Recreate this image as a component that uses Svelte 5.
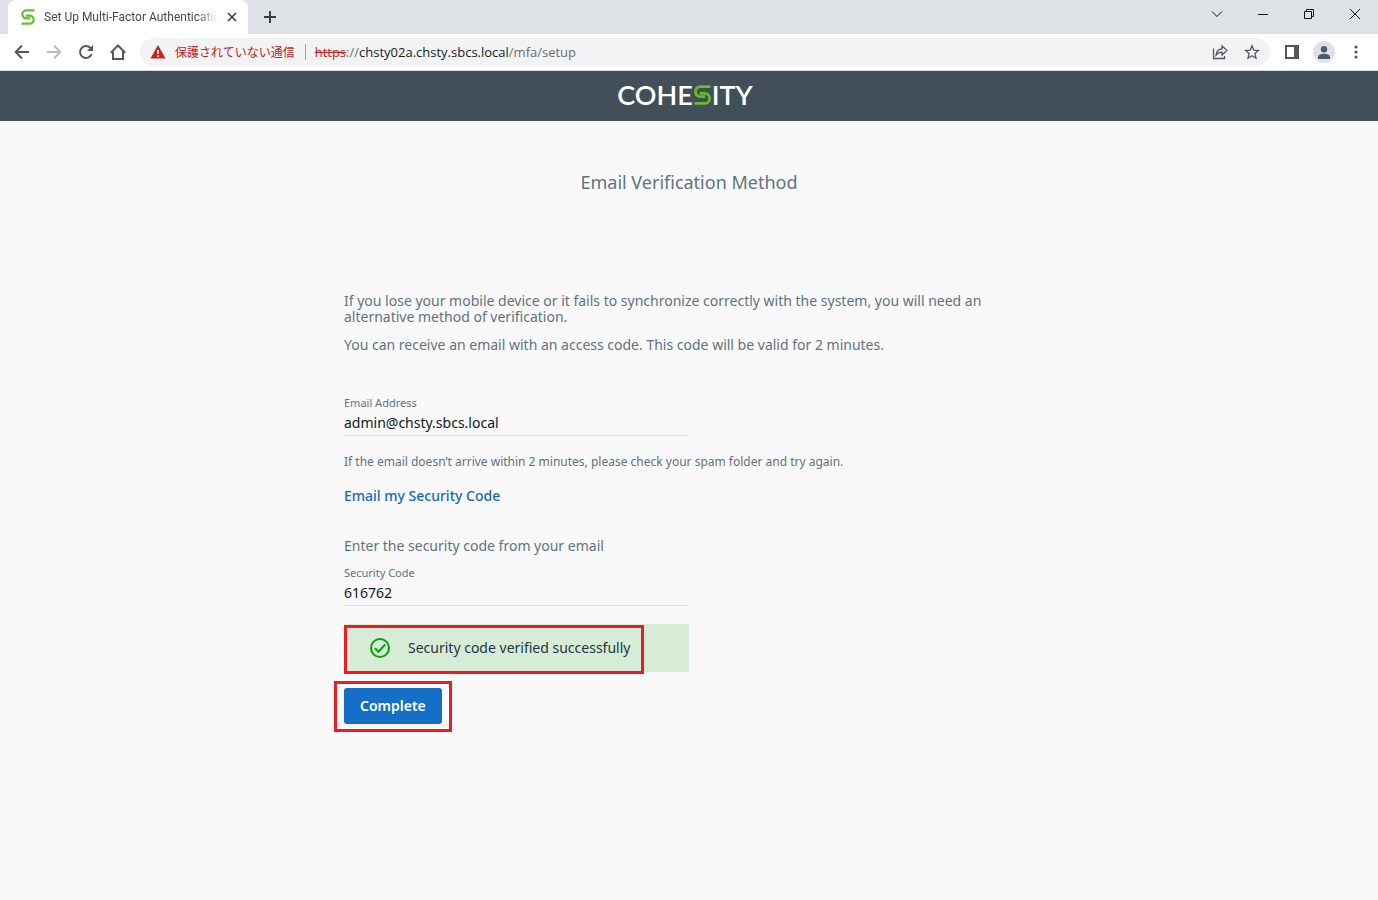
<script lang="ts">
	let email = $state('admin@chsty.sbcs.local');
	let code = $state('616762');
	let verified = $state(true);
</script>

{#snippet sMark()}
	<path d="M16.500 1.600H6.400a5 5 0 0 0 0 10h4.800" />
	<path d="M.5 18.400h10.100a5 5 0 0 0 0-10H5.800" />
{/snippet}

<div class="window">
	<div class="tabstrip">
		<div class="tab">
			<svg class="favicon" viewBox="0 0 17 20" aria-hidden="true">{@render sMark()}</svg>
			<span class="tab-title">Set Up Multi-Factor Authentication</span>
			<button class="tab-close" aria-label="Close tab">
				<svg width="10" height="10" viewBox="0 0 10 10"><path d="M1 1l8 8M9 1L1 9" stroke="#3c4043" stroke-width="1.600" /></svg>
			</button>
		</div>
		<button class="new-tab" aria-label="New tab">
			<svg width="12" height="12" viewBox="0 0 12 12"><path d="M6 0v12M0 6h12" stroke="#3c4043" stroke-width="2" /></svg>
		</button>
		<div class="controls">
			<button aria-label="Search tabs">
				<svg width="12" height="12" viewBox="0 0 12 12"><path d="M1 3.500l5 5 5-5" /></svg>
			</button>
			<button aria-label="Minimize">
				<svg width="12" height="12" viewBox="0 0 12 12"><path d="M1 6.500h10" /></svg>
			</button>
			<button aria-label="Restore">
				<svg width="12" height="12" viewBox="0 0 12 12"><path d="M1.500 3.500h7v7h-7zM3.500 3.500v-2h7v7h-2" /></svg>
			</button>
			<button aria-label="Close">
				<svg width="12" height="12" viewBox="0 0 12 12"><path d="M1 1l10 10M11 1L1 11" /></svg>
			</button>
		</div>
	</div>

	<div class="toolbar">
		<div class="nav">
			<button aria-label="Back">
				<svg width="16" height="16" viewBox="0 0 16 16"><path d="M15 8H2M8 1.500L1.700 8 8 14.500" /></svg>
			</button>
			<button class="off" aria-label="Forward" disabled>
				<svg width="16" height="16" viewBox="0 0 16 16"><path d="M1 8h13M8 1.500L14.300 8 8 14.500" /></svg>
			</button>
			<button aria-label="Reload">
				<svg width="16" height="16" viewBox="0 0 16 16">
					<path d="M13.600 10.200A6 6 0 1 1 12.400 3.900L14 5.500" />
					<path d="M15 1v6H9z" class="solid" />
				</svg>
			</button>
			<button aria-label="Home">
				<svg width="16" height="16" viewBox="0 0 16 16"><path d="M.8 8.800L8 1.500l7.200 7.300M3 7.500V15h10V7.500" /></svg>
			</button>
		</div>
		<div class="omnibox">
			<svg class="warn" width="16" height="14" viewBox="0 0 16 14" aria-hidden="true">
				<path d="M8 0l7.500 13.500H.5z" fill="#c5221f" />
				<path d="M8 5v4M8 10.200v1.800" stroke="#fff" stroke-width="1.600" />
			</svg>
			<span class="insecure">保護されていない通信</span>
			<span class="divider"></span>
			<div class="url" role="textbox" aria-label="Address" tabindex="0"><s>https</s>://<b>chsty02a.chsty.sbcs.local</b>/mfa/setup</div>
			<button aria-label="Share">
				<svg class="thin" width="16" height="16" viewBox="0 0 16 16">
					<path d="M1.500 4.500v10h11V12M4 11c.5-4 2.500-6 6-6.200V2l5 4.500-5 4.500V8.200C7.500 8.200 5.500 9 4 11z" />
				</svg>
			</button>
			<button aria-label="Bookmark">
				<svg class="thin" width="16" height="16" viewBox="0 0 16 16">
					<path d="M8 1.800l1.800 4.300 4.700.4-3.600 3.100 1.100 4.600L8 11.800l-4 2.400 1.100-4.600L1.500 6.500l4.700-.4z" />
				</svg>
			</button>
		</div>
		<div class="actions">
			<button aria-label="Side panel">
				<svg width="14" height="14" viewBox="0 0 14 14"><path d="M1 1h12v12H1z" /><path d="M9 1h4v12H9z" class="solid" /></svg>
			</button>
			<button class="avatar" aria-label="Profile">
				<svg width="12" height="13" viewBox="0 0 12 13"><circle cx="6" cy="3.200" r="3.200" /><path d="M0 13v-2c0-2.200 3-3.300 6-3.300s6 1.100 6 3.300v2z" /></svg>
			</button>
			<button aria-label="Menu">
				<svg width="4" height="14" viewBox="0 0 4 14" class="dots"><circle cx="2" cy="2" r="1.600" /><circle cx="2" cy="7" r="1.600" /><circle cx="2" cy="12" r="1.600" /></svg>
			</button>
		</div>
	</div>

	<header class="brand">
		<span class="logo">COHE<svg viewBox="0 0 17 20" role="img" aria-label="S">{@render sMark()}</svg>ITY</span>
	</header>

	<main>
		<h1>Email Verification Method</h1>

		<form onsubmit={(e) => e.preventDefault()}>
			<div class="intro">
				<p>If you lose your mobile device or it fails to synchronize correctly with the system, you will need an alternative method of verification.</p>
				<p>You can receive an email with an access code. This code will be valid for 2 minutes.</p>
			</div>

			<div class="field">
				<label for="email">Email Address</label>
				<input id="email" type="text" bind:value={email} />
			</div>
			<p class="hint">If the email doesn’t arrive within 2 minutes, please check your spam folder and try again.</p>
			<a class="send" href="#send">Email my Security Code</a>

			<p class="enter">Enter the security code from your email</p>
			<div class="field">
				<label for="code">Security Code</label>
				<input id="code" type="text" bind:value={code} />
			</div>

			{#if verified}
				<div class="alert" role="status">
					<svg width="20" height="20" viewBox="0 0 20 20" aria-hidden="true">
						<circle cx="10" cy="10" r="9" />
						<path d="M5 10.300l3.400 3.400 6.800-7.200" />
					</svg>
					<span>Security code verified successfully</span>
					<i class="mark mark-alert"></i>
				</div>
			{/if}
			<div class="submit">
				<button type="submit">Complete</button>
				<i class="mark mark-submit"></i>
			</div>
		</form>
	</main>
</div>

<style>
	:global(body) {
		margin: 0;
		background: #f9f9f9;
	}

	.window {
		min-height: 100vh;
		background: #f9f9f9;
		font-family: 'Noto Sans', sans-serif;
		font-size: 14px;
		line-height: 16px;
		color: #5f7380;
	}

	button {
		display: flex;
		align-items: center;
		justify-content: center;
		padding: 0;
		border: 0;
		background: none;
		font: inherit;
		cursor: pointer;
	}

	p,
	h1 {
		margin: 0;
	}

	/* browser chrome */
	.tabstrip {
		display: flex;
		height: 34px;
		background: #dee1e6;
	}
	.tab {
		display: flex;
		align-items: center;
		width: 240px;
		box-sizing: border-box;
		margin-left: 8px;
		padding: 0 8px 0 13px;
		border-radius: 8px 8px 0 0;
		background: #fff;
	}
	.favicon {
		width: 14px;
		height: 16px;
		flex: none;
		margin-right: 9px;
	}
	.favicon,
	.logo svg {
		fill: none;
		stroke: #66bc29;
		stroke-width: 2.8;
	}
	.tab-title {
		flex: 1;
		overflow: hidden;
		white-space: nowrap;
		font-family: Roboto, sans-serif;
		font-size: 12px;
		color: #45494d;
		mask-image: linear-gradient(to right, #000 88%, transparent);
	}
	.tab-close {
		width: 16px;
		height: 16px;
		margin-left: 6px;
	}
	.new-tab {
		width: 28px;
		margin-left: 8px;
	}
	.controls {
		display: flex;
		margin-left: auto;
	}
	.controls button {
		width: 46px;
		height: 28px;
	}
	.controls svg {
		fill: none;
		stroke: #111;
	}

	.toolbar {
		display: flex;
		align-items: center;
		height: 36px;
		border-bottom: 1px solid #d5d9dc;
		background: #fff;
	}
	.toolbar button {
		flex: none;
		width: 32px;
		height: 28px;
	}
	.toolbar svg {
		fill: none;
		stroke: #54585d;
		stroke-width: 2;
	}
	.toolbar .thin {
		stroke-width: 1.3;
	}
	.toolbar .solid {
		fill: #54585d;
		stroke: none;
	}
	.nav,
	.actions {
		display: flex;
		align-items: center;
	}
	.nav {
		padding: 0 6px;
	}
	.toolbar .off svg {
		stroke: #babcbe;
	}
	.omnibox {
		display: flex;
		flex: 1;
		align-items: center;
		height: 28px;
		padding: 0 2px 0 10px;
		border-radius: 14px;
		background: #f1f3f4;
		white-space: nowrap;
	}
	.toolbar .warn {
		flex: none;
		margin-right: 9px;
		stroke: none;
	}
	.insecure {
		font-family: 'Noto Sans CJK JP', sans-serif;
		font-size: 12px;
		color: #c5221f;
	}
	.divider {
		width: 1px;
		height: 16px;
		margin: 0 9px 0 10px;
		background: #9aa0a6;
	}
	.url {
		flex: 1;
		font-family: 'Open Sans', sans-serif;
		font-size: 13px;
		color: #6a6e73;
	}
	.url s {
		color: #c5221f;
	}
	.url b {
		font-weight: 400;
		color: #202124;
	}
	.actions {
		padding: 0 6px;
	}
	.toolbar .avatar {
		width: 22px;
		height: 22px;
		margin: 0 5px;
		border-radius: 50%;
		background: #dee1e6;
	}
	.toolbar .avatar svg {
		fill: #4d5b70;
		stroke: none;
	}
	.toolbar .dots {
		fill: #54585d;
		stroke: none;
	}

	/* page */
	.brand {
		display: flex;
		align-items: center;
		justify-content: center;
		height: 50px;
		box-sizing: border-box;
		padding: 0 8px 2px 0;
		background: #424f58;
	}
	.logo {
		display: flex;
		align-items: center;
		font-family: Lato, sans-serif;
		font-size: 27px;
		font-weight: 600;
		color: #fff;
	}
	.logo svg {
		width: 17px;
		height: 20px;
		margin: 0 1px;
	}

	main {
		max-width: 690px;
		margin: 0 auto;
		padding-top: 49px;
	}
	h1 {
		font-size: 18px;
		font-weight: 400;
		line-height: 24px;
		text-align: center;
	}
	.intro {
		display: grid;
		gap: 12px;
		margin: 99px 0 43px;
	}
	.field {
		display: flex;
		flex-direction: column;
		width: 50%;
		border-bottom: 1px solid #dcdfe1;
	}
	.field label {
		font-size: 11px;
		line-height: 14px;
		color: #5f7380;
	}
	.field input {
		height: 25px;
		padding: 0;
		border: 0;
		outline: 0;
		background: none;
		font: inherit;
		color: #0b1a26;
	}
	.hint {
		margin: 18px 0;
		font-size: 12px;
	}
	.send {
		display: inline-block;
		font-weight: 500;
		color: #1667c4;
		text-decoration: none;
	}
	.enter {
		margin: 34px 0 12px;
	}
	.alert {
		position: relative;
		display: flex;
		align-items: center;
		gap: 18px;
		width: 50%;
		height: 48px;
		box-sizing: border-box;
		margin: 18px 0 16px;
		padding-left: 26px;
		background: #d7ecd7;
		color: #22343f;
	}
	.alert svg {
		fill: none;
		stroke: #0a9e0a;
		stroke-width: 2;
	}
	.submit {
		position: relative;
		width: fit-content;
	}
	.submit button {
		height: 36px;
		padding: 0 16px;
		border-radius: 3px;
		background: #156fc8;
		font-weight: 600;
		color: #fff;
	}

	/* red callout frames */
	.mark {
		position: absolute;
		box-sizing: border-box;
		border: 3px solid #ed1c24;
		pointer-events: none;
	}
	.mark-alert {
		inset: 1px 45px -2px 0;
	}
	.mark-submit {
		inset: -7px -10px -8px -10px;
	}
</style>
